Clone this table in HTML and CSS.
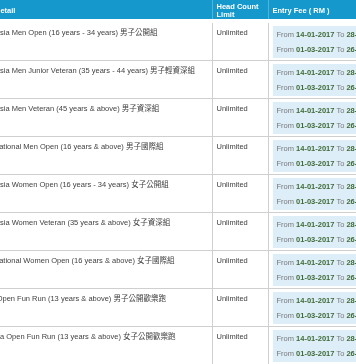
FILE: index.html
```html
<!DOCTYPE html>
<html>
<head>
<meta charset="utf-8">
<link rel="stylesheet" href="styles.css">
</head>
<body>
<div class="viewport">
<table class="fees">
  <colgroup>
    <col class="c-event">
    <col class="c-limit">
    <col class="c-fee">
  </colgroup>
  <thead>
    <tr>
      <th class="h-event">Detail</th>
      <th>Head Count Limit</th>
      <th>Entry Fee ( RM )</th>
    </tr>
  </thead>
  <tbody>
    <tr>
      <td>Malaysia Men Open (16 years - 34 years) 男子公開組</td>
      <td>Unlimited</td>
      <td><div class="fee"><div>From <b>14-01-2017</b> To <b>28-02-2017</b> : RM 60.00</div><div>From <b>01-03-2017</b> To <b>26-03-2017</b> : RM 70.00</div></div></td>
    </tr>
    <tr>
      <td>Malaysia Men Junior Veteran (35 years - 44 years) 男子輕資深組</td>
      <td>Unlimited</td>
      <td><div class="fee"><div>From <b>14-01-2017</b> To <b>28-02-2017</b> : RM 60.00</div><div>From <b>01-03-2017</b> To <b>26-03-2017</b> : RM 70.00</div></div></td>
    </tr>
    <tr>
      <td>Malaysia Men Veteran (45 years &amp; above) 男子資深組</td>
      <td>Unlimited</td>
      <td><div class="fee"><div>From <b>14-01-2017</b> To <b>28-02-2017</b> : RM 60.00</div><div>From <b>01-03-2017</b> To <b>26-03-2017</b> : RM 70.00</div></div></td>
    </tr>
    <tr>
      <td>International Men Open (16 years &amp; above) 男子國際組</td>
      <td>Unlimited</td>
      <td><div class="fee"><div>From <b>14-01-2017</b> To <b>28-02-2017</b> : RM 80.00</div><div>From <b>01-03-2017</b> To <b>26-03-2017</b> : RM 90.00</div></div></td>
    </tr>
    <tr>
      <td>Malaysia Women Open (16 years - 34 years) 女子公開組</td>
      <td>Unlimited</td>
      <td><div class="fee"><div>From <b>14-01-2017</b> To <b>28-02-2017</b> : RM 60.00</div><div>From <b>01-03-2017</b> To <b>26-03-2017</b> : RM 70.00</div></div></td>
    </tr>
    <tr>
      <td>Malaysia Women Veteran (35 years &amp; above) 女子資深組</td>
      <td>Unlimited</td>
      <td><div class="fee"><div>From <b>14-01-2017</b> To <b>28-02-2017</b> : RM 60.00</div><div>From <b>01-03-2017</b> To <b>26-03-2017</b> : RM 70.00</div></div></td>
    </tr>
    <tr>
      <td>International Women Open (16 years &amp; above) 女子國際組</td>
      <td>Unlimited</td>
      <td><div class="fee"><div>From <b>14-01-2017</b> To <b>28-02-2017</b> : RM 80.00</div><div>From <b>01-03-2017</b> To <b>26-03-2017</b> : RM 90.00</div></div></td>
    </tr>
    <tr>
      <td>Men Open Fun Run (13 years &amp; above) 男子公開歡樂跑</td>
      <td>Unlimited</td>
      <td><div class="fee"><div>From <b>14-01-2017</b> To <b>28-02-2017</b> : RM 40.00</div><div>From <b>01-03-2017</b> To <b>26-03-2017</b> : RM 50.00</div></div></td>
    </tr>
    <tr>
      <td>Melaka Open Fun Run (13 years &amp; above) 女子公開歡樂跑</td>
      <td>Unlimited</td>
      <td><div class="fee"><div>From <b>14-01-2017</b> To <b>28-02-2017</b> : RM 40.00</div><div>From <b>01-03-2017</b> To <b>26-03-2017</b> : RM 50.00</div></div></td>
    </tr>
  </tbody>
</table>
</div>
</body>
</html>
```

FILE: styles.css
```css
html, body {
  margin: 0;
  padding: 0;
  background: #ffffff;
}

.viewport {
  width: 100vw;
  height: 100vh;
  overflow: hidden;
  will-change: transform;
}

.fees {
  border-collapse: collapse;
  table-layout: fixed;
  width: 520px;
  margin: -1px 0 0 -24px;
  font-family: "Liberation Sans", "Noto Sans CJK TC", sans-serif;
  font-size: 7.5px;
  color: #3f3f3f;
}

.c-event { width: 236px; }
.c-limit { width: 56px; }
.c-fee { width: 228px; }

.fees th {
  background: #1598cc;
  color: #ffffff;
  font-weight: bold;
  text-align: left;
  vertical-align: middle;
  line-height: 8px;
  height: 16px;
  padding: 4px 4px 0 4px;
  border-left: 1px solid #4fb3dc;
  border-bottom: 4px solid #ffffff;
}

.fees th.h-event {
  padding-left: 19px;
  border-left: none;
}

.fees td {
  vertical-align: top;
  line-height: 9px;
  padding: 5px 4px 2px 4px;
  border-bottom: 1px solid #cfcfcf;
  border-left: 1px solid #cfcfcf;
  white-space: nowrap;
  overflow: hidden;
}

.fees td:first-child {
  border-left: none;
}

.fees td:last-child {
  padding: 3px 0 2px 4px;
}

.fee {
  background: #ddeef9;
  color: #777777;
  line-height: 15px;
  padding: 1px 4px 1px 4px;
}

.fee b {
  color: #3f6a35;
  font-weight: bold;
}
```
